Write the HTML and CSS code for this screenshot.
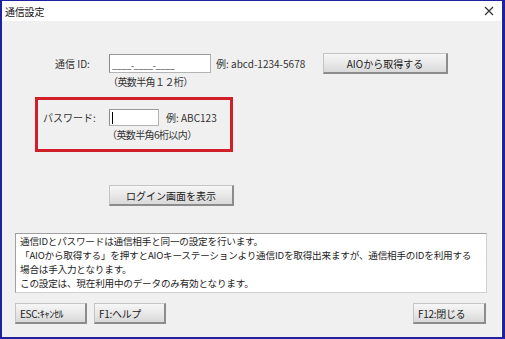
FILE: index.html
```html
<!DOCTYPE html>
<html lang="ja">
<head>
<meta charset="utf-8">
<title>通信設定</title>
<link rel="stylesheet" href="styles.css">
</head>
<body>
<div class="window">
  <div class="titlebar">
    <span class="title">通信設定</span>
    <svg class="close" width="10" height="10" viewBox="0 0 10 10"><path d="M1 1 L9 9 M9 1 L1 9" stroke="#333" stroke-width="1.2" fill="none"/></svg>
  </div>
  <div class="content">
    <div class="row row-id">
      <span class="lbl lbl-id">通信 ID:</span>
      <span class="input input-id"><span class="mask">____-____-____</span></span>
      <span class="example ex-id">例:&nbsp;abcd-1234-5678</span>
      <span class="btn btn-aio">AIOから取得する</span>
    </div>
    <div class="hint hint-id">（英数半角１２桁）</div>
    <div class="redbox">
      <div class="row row-pw">
        <span class="lbl lbl-pw">パスワード:</span>
        <span class="input input-pw"><span class="caret"></span></span>
        <span class="example ex-pw">例:&nbsp;ABC123</span>
      </div>
      <div class="hint hint-pw">（英数半角6桁以内）</div>
    </div>
    <div class="btn btn-login">ログイン画面を表示</div>
    <div class="memo">
      <div class="memo-line">通信IDとパスワードは通信相手と同一の設定を行います。</div>
      <div class="memo-line">「AIOから取得する」を押すとAIOキーステーションより通信IDを取得出来ますが、通信相手のIDを利用する</div>
      <div class="memo-line">場合は手入力となります。</div>
      <div class="memo-line">この設定は、現在利用中のデータのみ有効となります。</div>
    </div>
    <div class="footer">
      <span class="btn btn-foot btn-esc">ESC:ｷｬﾝｾﾙ</span>
      <span class="btn btn-foot btn-f1">F1:ヘルプ</span>
      <span class="btn btn-foot btn-f12">F12:閉じる</span>
    </div>
  </div>
</div>
</body>
</html>
```

FILE: styles.css
```css
* { box-sizing: border-box; }
html, body { margin: 0; padding: 0; }
body {
  width: 505px;
  height: 339px;
  overflow: hidden;
  font-family: "Noto Sans CJK JP", "Liberation Sans", sans-serif;
  font-size: 10px;
  color: #1e1e1e;
  background: #ffffff;
}
.window {
  width: 505px;
  height: 339px;
  border-top: 1px solid #1e22a0;
  border-left: 2px solid #1e22a0;
  border-right: 3px solid #1e22a0;
  border-bottom: 2px solid #1e22a0;
  background: #f0f0f0;
  display: flex;
  flex-direction: column;
}
.titlebar {
  height: 20px;
  background: #ffffff;
  display: flex;
  align-items: center;
  padding-left: 3px;
  padding-right: 8px;
}
.title { font-size: 10px; color: #111; letter-spacing: -0.2px; }
.close { margin-left: auto; }
.content {
  flex: 1;
  display: flex;
  flex-direction: column;
  align-items: flex-start;
  border-right: 1px solid #ffffff;
}
.row { display: flex; align-items: center; }
.row-id { margin-top: 32px; height: 21px; }
.lbl { white-space: nowrap; color: #333; }
.lbl-id { width: 107px; padding-left: 53px; }
.input {
  background: #ffffff;
  border: 1px solid #b4b4b4;
  border-top-color: #9a9a9a;
  border-left-color: #8a8a8a;
  position: relative;
}
.input-id { width: 102px; height: 19px; display: flex; align-items: flex-end; padding-left: 2px; }
.mask { font-size: 9px; line-height: 12px; color: #333; letter-spacing: -0.3px; }
.example { white-space: nowrap; color: #333; }
.ex-id { width: 112px; padding-left: 5px; }
.btn {
  display: flex;
  align-items: center;
  justify-content: center;
  height: 21px;
  white-space: nowrap;
  color: #222;
  background: linear-gradient(#f6f6f6, #e9e9e9 50%, #d9d9d9);
  border: 1px solid #c4c4c4;
  border-right: 2px solid #8c8c8c;
  border-bottom: 2px solid #8c8c8c;
}
.btn-aio { width: 125px; }
.hint { white-space: nowrap; line-height: 12px; color: #333; letter-spacing: -0.6px; }
.hint-id { margin-top: 2px; margin-left: 106px; }
.redbox {
  margin-top: 9px;
  margin-left: 33px;
  width: 198px;
  height: 55px;
  border: 3px solid #d01f28;
  display: flex;
  flex-direction: column;
  align-items: flex-start;
}
.row-pw { margin-top: 9px; height: 17px; }
.lbl-pw { width: 71px; padding-left: 5px; }
.input-pw { width: 50px; height: 17px; }
.caret { position: absolute; left: 2px; top: 2px; width: 1px; height: 12px; background: #000; }
.ex-pw { padding-left: 7px; }
.hint-pw { margin-top: 3px; margin-left: 69px; }
.btn-login { margin-top: 33px; margin-left: 107px; width: 125px; }
.memo {
  margin-top: 27px;
  margin-left: 13px;
  width: 472px;
  height: 60px;
  background: #ffffff;
  border: 1px solid #a0a0a0;
  border-right-color: #d0d0d0;
  border-bottom-color: #d0d0d0;
  padding: 0 4px;
  font-size: 9.6px;
  letter-spacing: -0.2px;
  white-space: nowrap;
  color: #1e1e1e;
  display: flex;
  flex-direction: column;
}
.memo-line { height: 14px; line-height: 14px; }
.footer {
  margin-top: 10px;
  width: 100%;
  display: flex;
  padding-left: 13px;
  padding-right: 15px;
}
.btn-foot { width: 72px; justify-content: flex-start; padding-left: 4px; letter-spacing: -0.3px; }
.btn-f1 { margin-left: 7px; }
.btn-f12 { margin-left: auto; width: 73px; }
```
